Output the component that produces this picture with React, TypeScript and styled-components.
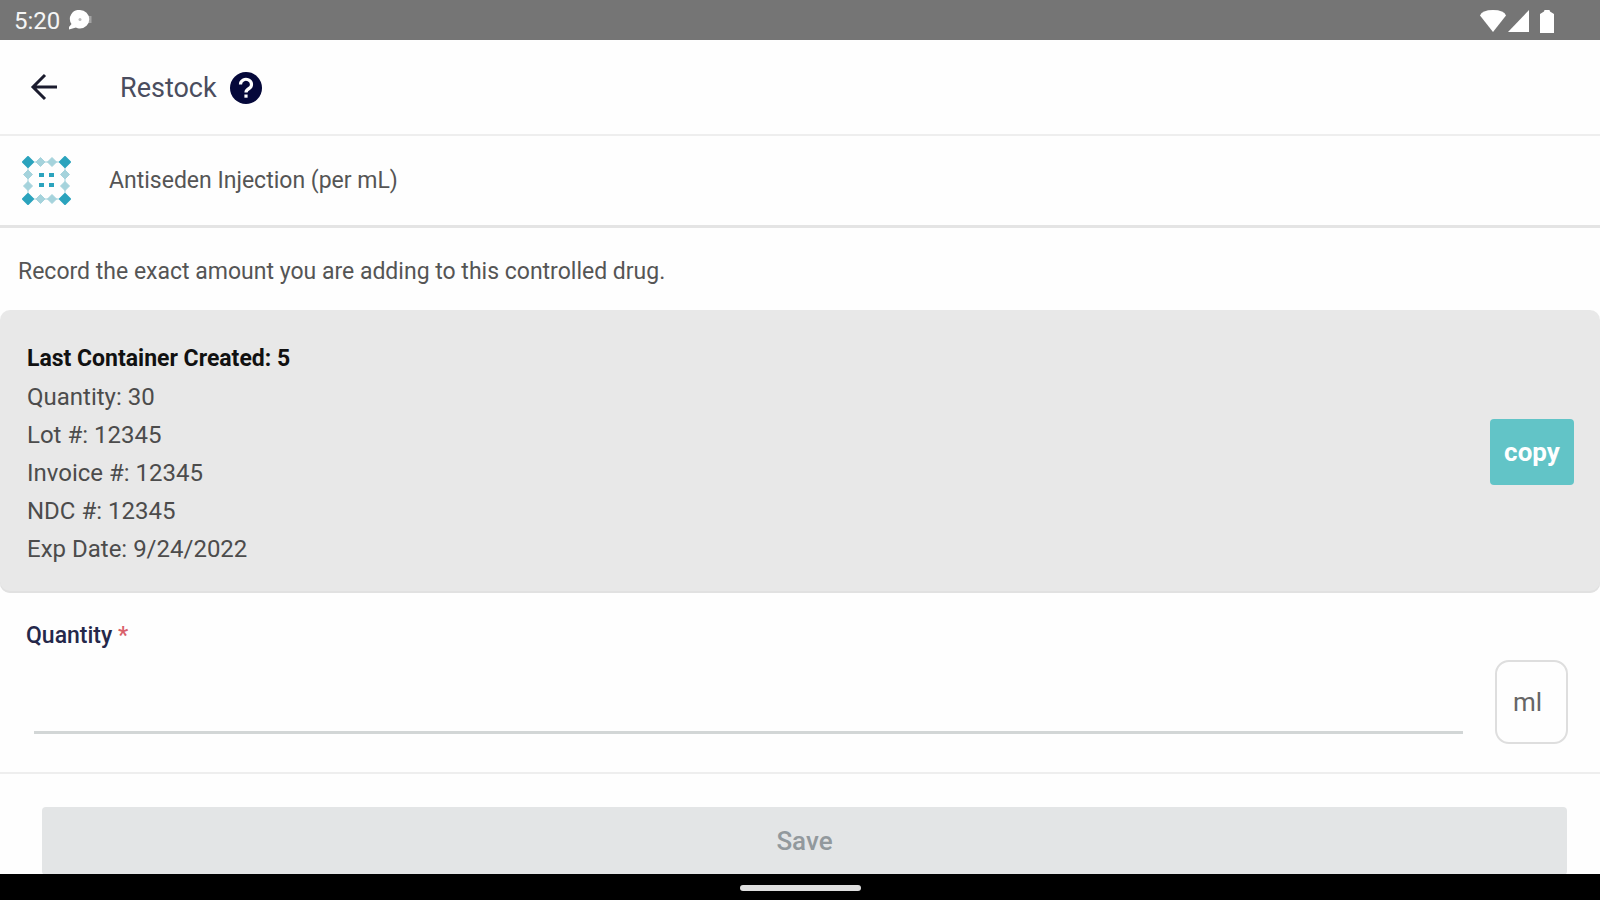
import React from "react";
import styled, { createGlobalStyle } from "styled-components";

const GlobalStyle = createGlobalStyle`
  * { box-sizing: border-box; }
  body { margin: 0; background: #fff; font-family: Roboto, "Liberation Sans", sans-serif; }
  button, input { font-family: inherit; }
`;

const Screen = styled.div`
  height: 100vh;
  display: flex;
  flex-direction: column;
  background: #fefefe;
`;

const StatusBar = styled.div`
  flex: none;
  height: 40px;
  padding: 2px 46px 0 14px;
  display: flex;
  align-items: center;
  justify-content: space-between;
  background: #757575;
  color: #f5f5f5;
  font-size: 24px;
`;

const StatusGroup = styled.div<{ $gap: number }>`
  display: flex;
  align-items: center;
  gap: ${(p) => p.$gap}px;
  svg { display: block; }
`;

const Header = styled.header`
  flex: none;
  height: 96px;
  padding: 2px 28px 0;
  display: flex;
  align-items: center;
  border-bottom: 2px solid #eeeeee;
`;

const IconButton = styled.button`
  border: 0;
  padding: 0;
  background: none;
  display: flex;
`;

const Title = styled.h1`
  margin: 0 12px 0 60px;
  font-size: 27px;
  line-height: 32px;
  font-weight: 400;
  color: #4a4d5e;
`;

const DrugRow = styled.section`
  flex: none;
  height: 92px;
  padding: 0 22px;
  display: flex;
  align-items: center;
  gap: 38px;
  border-bottom: 3px solid #e4e4e4;
`;

const DrugName = styled.h2`
  margin: 0;
  font-size: 23px;
  line-height: 32px;
  font-weight: 400;
  color: #555;
`;

const Content = styled.main`
  flex: 1;
  min-height: 0;
  overflow-y: auto;
  scrollbar-width: none;
`;

const Hint = styled.p`
  margin: 0;
  padding: 27px 18px 21px;
  font-size: 23px;
  line-height: 34px;
  color: #555;
`;

const LastContainer = styled.section`
  padding: 0 26px;
  display: flex;
  align-items: center;
  justify-content: space-between;
  background: #e8e8e8;
  border-radius: 10px;
  box-shadow: inset 0 -2px 0 #e1e1e1;
`;

const Details = styled.ul`
  margin: 0;
  padding: 30px 0 25px 1px;
  list-style: none;
`;

const Detail = styled.li<{ $strong?: boolean }>`
  font-size: ${(p) => (p.$strong ? 23 : 24)}px;
  line-height: 38px;
  font-weight: ${(p) => (p.$strong ? 700 : 400)};
  color: ${(p) => (p.$strong ? "#111" : "#4c4c4c")};
`;

const CopyButton = styled.button`
  width: 84px;
  height: 66px;
  padding: 0;
  border: 0;
  border-radius: 4px;
  background: #62c4c7;
  color: #fff;
  font-size: 26px;
  font-weight: 700;
`;

const Field = styled.div`
  padding: 27px 32px 28px 26px;
  border-bottom: 2px solid #eeeeee;
`;

const Label = styled.label`
  display: block;
  font-size: 23px;
  line-height: 32px;
  font-weight: 500;
  color: #25284a;
`;

const Required = styled.span`
  color: #d9606a;
`;

const InputRow = styled.div`
  display: flex;
  align-items: center;
  gap: 32px;
  padding: 8px 0 0 8px;
`;

const QuantityInput = styled.input`
  flex: 1;
  min-width: 0;
  height: 64px;
  padding: 0;
  border: 0;
  border-bottom: 3px solid #d2d6d6;
  outline: 0;
  background: transparent;
  font-size: 23px;
`;

const Unit = styled.span`
  width: 73px;
  height: 84px;
  padding-right: 8px;
  display: flex;
  align-items: center;
  justify-content: center;
  border: 2px solid #dedede;
  border-radius: 14px;
  font-size: 26px;
  color: #666;
`;

const Actions = styled.div`
  padding: 33px 33px 0 42px;
`;

const SaveButton = styled.button`
  display: block;
  width: 100%;
  height: 68px;
  padding: 0;
  border: 0;
  border-radius: 4px;
  background: #e3e5e6;
  color: #92999d;
  font-size: 26px;
  font-weight: 500;
`;

const NavBar = styled.div`
  flex: none;
  height: 26px;
  padding-top: 2px;
  display: flex;
  align-items: center;
  justify-content: center;
  background: #000;
`;

const HomeHandle = styled.span`
  width: 121px;
  height: 6px;
  border-radius: 3px;
  background: #dedede;
`;

const BatterySlot = styled.span`
  padding-left: 9px;
`;

const NotificationIcon = () => (
  <svg width="26" height="22" viewBox="0 0 26 22" aria-hidden="true">
    <path d="M19 6h4.500v7H18z" fill="#a3a3a3" />
    <path d="M12 0a9 9 0 1 1 0 18.500c-1.500 0-3-.4-4-1L1 19.500V17l2.500-3A9 9 0 0 1 12 0z" fill="#fff" />
    <circle cx="12" cy="9.500" r="1.500" fill="#bbb" />
  </svg>
);

const WifiIcon = () => (
  <svg width="26" height="22" viewBox="0 0 26 22" aria-hidden="true">
    <path d="M0 5.500Q2 0 13 0T26 5.500L13 22z" fill="#fff" />
  </svg>
);

const SignalIcon = () => (
  <svg width="21" height="22" viewBox="0 0 21 22" aria-hidden="true">
    <path d="M21 0v22H0z" fill="#fff" />
  </svg>
);

const BatteryIcon = () => (
  <svg width="14" height="23" viewBox="0 0 14 23" aria-hidden="true">
    <path d="M4.500 0h5L10 1.500 14 4v19H0V4l4-2.500z" fill="#fff" />
  </svg>
);

const BackIcon = () => (
  <svg width="32" height="32" viewBox="0 0 32 32" fill="none" stroke="#1b1c2e" strokeWidth="3" aria-hidden="true">
    <path d="M29 15H5M17 3L5 15l12 12" />
  </svg>
);

const HelpIcon = () => (
  <svg width="34" height="34" viewBox="0 0 34 34" fill="none" aria-hidden="true">
    <circle cx="17" cy="17" r="16" fill="#05083a" />
    <path d="M11.500 13.500a5.500 5 0 1 1 8.500 4q-3 1.700-3 4" stroke="#fff" strokeWidth="3.200" />
    <path d="M15.400 23.500h3.200v3.200h-3.200z" fill="#fff" />
  </svg>
);

const STEPS = [6, 18.5, 30, 43];

const DrugIcon = () => (
  <svg width="49" height="49" viewBox="0 0 49 49" aria-hidden="true">
    <path d="M6 6h37v37H6z" fill="none" stroke="#cfe8ed" strokeWidth="2" />
    {STEPS.flatMap((y, row) =>
      STEPS.map((x, col) => {
        const edgeRow = row === 0 || row === 3;
        const edgeCol = col === 0 || col === 3;
        if (!edgeRow && !edgeCol) return null;
        const corner = edgeRow && edgeCol;
        const r = corner ? 5 : 4.5;
        return (
          <path
            key={`${x}-${y}`}
            d={`M${x} ${y - r}l${r} ${r}l${-r} ${r}l${-r} ${-r}z`}
            fill={corner ? "#2ba3bd" : "#a5d3dc"}
            stroke={corner ? "#2ba3bd" : "#a5d3dc"}
            strokeWidth={corner ? 2 : 1}
            strokeLinejoin="round"
          />
        );
      })
    )}
    <path d="M17 17h5v4h-5zM27 17h5v4h-5zM17 27h5v4h-5zM27 27h5v4h-5z" fill="#2ba3bd" />
  </svg>
);

const details = ["Quantity: 30", "Lot #: 12345", "Invoice #: 12345", "NDC #: 12345", "Exp Date: 9/24/2022"];

export default function App() {
  return (
    <>
      <GlobalStyle />
      <Screen>
        <StatusBar>
          <StatusGroup $gap={8}>
            <span>5:20</span>
            <NotificationIcon />
          </StatusGroup>
          <StatusGroup $gap={2}>
            <WifiIcon />
            <SignalIcon />
            <BatterySlot>
              <BatteryIcon />
            </BatterySlot>
          </StatusGroup>
        </StatusBar>
        <Header>
          <IconButton type="button" aria-label="Back">
            <BackIcon />
          </IconButton>
          <Title>Restock</Title>
          <IconButton type="button" aria-label="Help">
            <HelpIcon />
          </IconButton>
        </Header>
        <DrugRow>
          <DrugIcon />
          <DrugName>Antiseden Injection (per mL)</DrugName>
        </DrugRow>
        <Content>
          <Hint>Record the exact amount you are adding to this controlled drug.</Hint>
          <LastContainer>
            <Details>
              <Detail $strong>Last Container Created: 5</Detail>
              {details.map((text) => (
                <Detail key={text}>{text}</Detail>
              ))}
            </Details>
            <CopyButton type="button">copy</CopyButton>
          </LastContainer>
          <form>
            <Field>
              <Label htmlFor="quantity">
                Quantity <Required>*</Required>
              </Label>
              <InputRow>
                <QuantityInput id="quantity" type="text" inputMode="decimal" required />
                <Unit>ml</Unit>
              </InputRow>
            </Field>
            <Actions>
              <SaveButton type="submit" disabled>
                Save
              </SaveButton>
            </Actions>
          </form>
        </Content>
        <NavBar>
          <HomeHandle />
        </NavBar>
      </Screen>
    </>
  );
}
